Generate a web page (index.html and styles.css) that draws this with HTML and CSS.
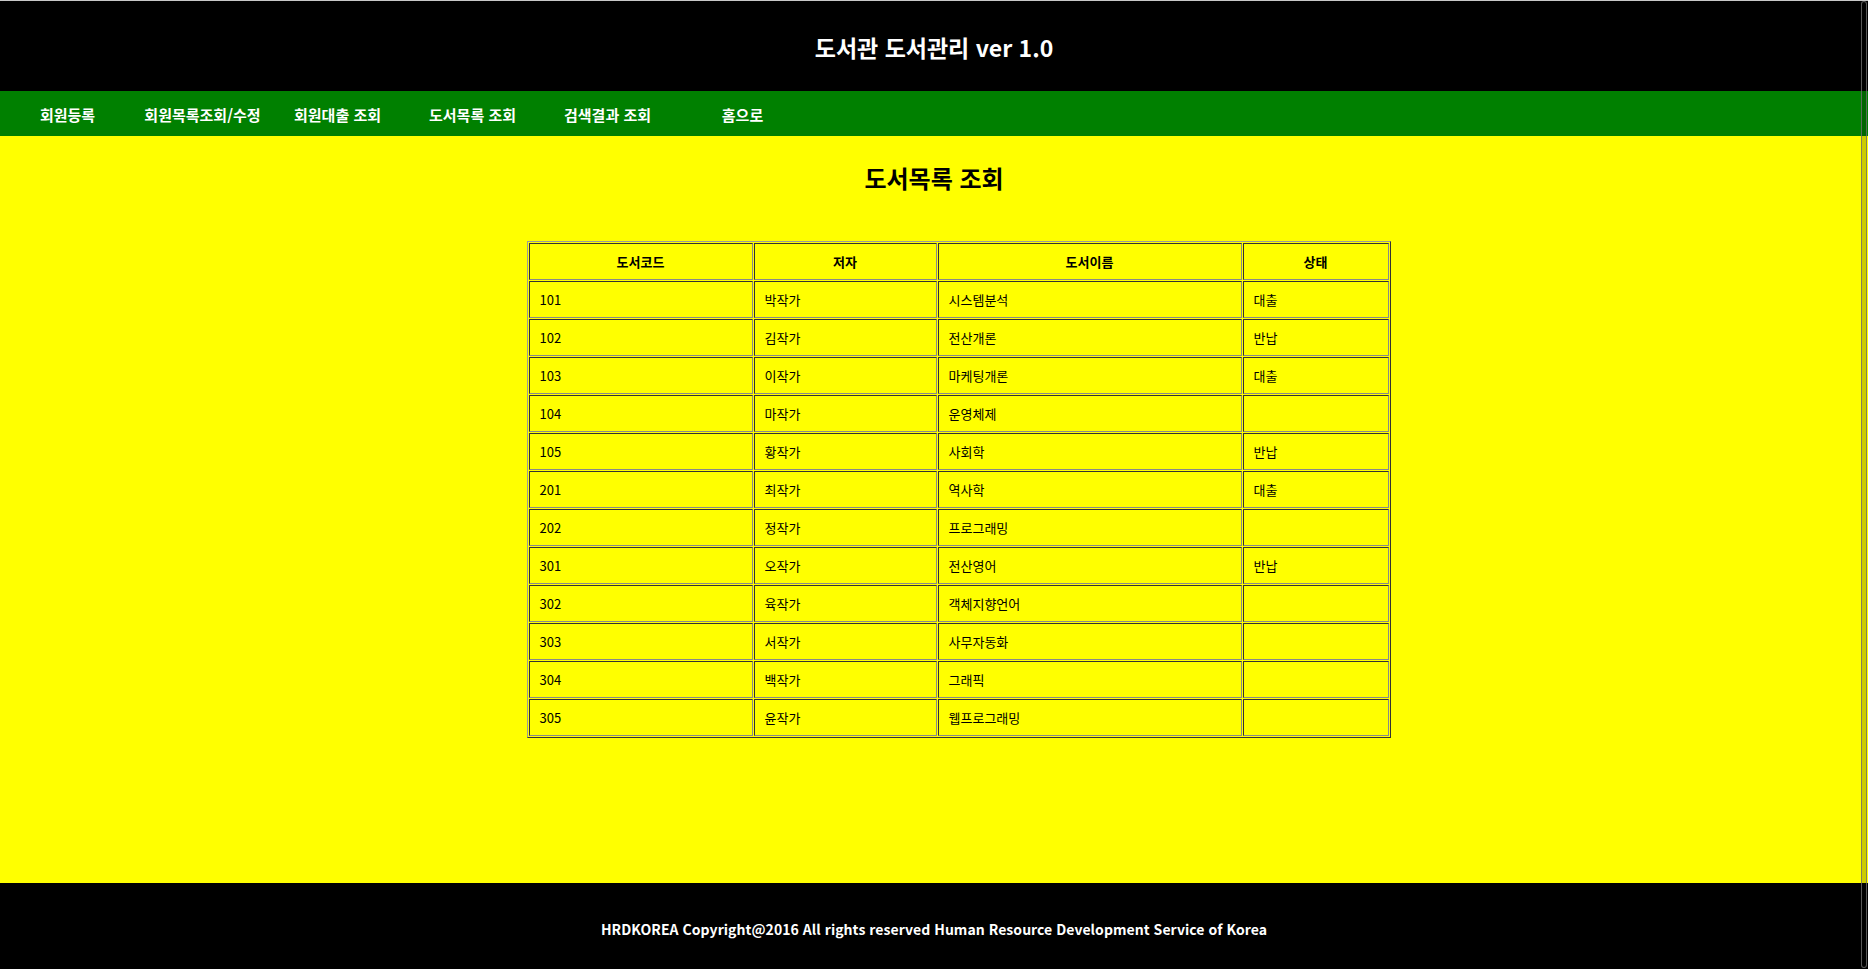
FILE: index.html
```html
<!DOCTYPE html>
<html lang="ko">
<head>
<meta charset="utf-8">
<title>도서관 도서관리 ver 1.0</title>
<link rel="stylesheet" href="styles.css">
</head>
<body>
<header class="site-header">
  <h1 class="site-title">도서관 도서관리 ver 1.0</h1>
</header>
<nav class="site-nav">
  <a class="nav-item" href="#">회원등록</a>
  <a class="nav-item" href="#">회원목록조회/수정</a>
  <a class="nav-item" href="#">회원대출 조회</a>
  <a class="nav-item" href="#">도서목록 조회</a>
  <a class="nav-item" href="#">검색결과 조회</a>
  <a class="nav-item" href="#">홈으로</a>
</nav>
<main class="content">
  <h2 class="page-title">도서목록 조회</h2>
  <div class="table-wrap">
    <table class="book-table">
      <thead>
        <tr>
          <th class="c1">도서코드</th>
          <th class="c2">저자</th>
          <th class="c3">도서이름</th>
          <th class="c4">상태</th>
        </tr>
      </thead>
      <tbody>
        <tr><td>101</td><td>박작가</td><td>시스템분석</td><td>대출</td></tr>
        <tr><td>102</td><td>김작가</td><td>전산개론</td><td>반납</td></tr>
        <tr><td>103</td><td>이작가</td><td>마케팅개론</td><td>대출</td></tr>
        <tr><td>104</td><td>마작가</td><td>운영체제</td><td></td></tr>
        <tr><td>105</td><td>황작가</td><td>사회학</td><td>반납</td></tr>
        <tr><td>201</td><td>최작가</td><td>역사학</td><td>대출</td></tr>
        <tr><td>202</td><td>정작가</td><td>프로그래밍</td><td></td></tr>
        <tr><td>301</td><td>오작가</td><td>전산영어</td><td>반납</td></tr>
        <tr><td>302</td><td>육작가</td><td>객체지향언어</td><td></td></tr>
        <tr><td>303</td><td>서작가</td><td>사무자동화</td><td></td></tr>
        <tr><td>304</td><td>백작가</td><td>그래픽</td><td></td></tr>
        <tr><td>305</td><td>윤작가</td><td>웹프로그래밍</td><td></td></tr>
      </tbody>
    </table>
  </div>
</main>
<footer class="site-footer">
  <p class="copyright">HRDKOREA Copyright@2016 All rights reserved Human Resource Development Service of Korea</p>
</footer>
<div class="scroll-overlay"></div>
</body>
</html>
```
FILE: styles.css
```css
* {
  box-sizing: border-box;
}

html, body {
  margin: 0;
  padding: 0;
}

body {
  font-family: "Noto Sans CJK KR", "Noto Sans", sans-serif;
  color: #000;
  background: #ffff00;
  overflow: hidden;
}

.site-header {
  height: 91px;
  border-top: 1px solid #c8c8c8;
  background: #000;
  display: flex;
  align-items: center;
  justify-content: center;
}

.site-title {
  margin: 0;
  padding-top: 1px;
  font-size: 23px;
  font-weight: 700;
  color: #fff;
  line-height: 30px;
}

.site-nav {
  height: 45px;
  background: #008000;
  display: flex;
  align-items: center;
}

.nav-item {
  width: 135px;
  text-align: center;
  color: #fff;
  font-size: 15px;
  font-weight: 700;
  text-decoration: none;
  line-height: 20px;
  padding-top: 2px;
}

.content {
  height: 747px;
  background: #ffff00;
  padding-top: 26px;
}

.page-title {
  margin: 0;
  text-align: center;
  font-size: 24px;
  font-weight: 700;
  line-height: 32px;
}

.table-wrap {
  padding-left: 49px;
  margin-top: 47px;
}

.book-table {
  width: 864px;
  margin: 0 auto;
  border-collapse: separate;
  border-spacing: 1px;
  border: 1px solid;
  border-color: #9a9a9a #333 #333 #9a9a9a;
  table-layout: fixed;
}

.book-table th,
.book-table td {
  border: 1px solid;
  border-color: #333 #8a8a8a #8a8a8a #333;
  padding: 1px 10px 0;
  height: 37px;
  font-size: 13px;
  line-height: 20px;
  vertical-align: middle;
}

.book-table th {
  font-weight: 700;
  text-align: center;
}

.book-table td {
  font-weight: 400;
  text-align: left;
}

.c1 { width: 224px; }
.c2 { width: 183px; }
.c3 { width: 304px; }
.c4 { width: 146px; }

.site-footer {
  height: 86px;
  background: #000;
  display: flex;
  align-items: center;
  justify-content: center;
}

.copyright {
  margin: 0;
  padding-top: 6px;
  color: #fff;
  font-size: 14px;
  font-weight: 700;
  line-height: 20px;
  letter-spacing: 0.05px;
}

.scroll-overlay {
  position: fixed;
  top: 1px;
  bottom: 1px;
  right: 1px;
  width: 6px;
  border: 1px solid rgba(110, 110, 110, 0.8);
  border-radius: 3px;
  background: rgba(0, 0, 0, 0.2);
}
```
